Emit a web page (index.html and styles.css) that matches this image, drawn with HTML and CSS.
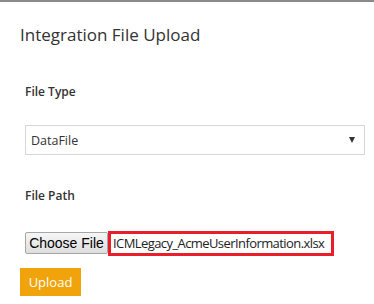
FILE: index.html
```html
<!DOCTYPE html>
<html>
<head>
<meta charset="utf-8">
<link rel="stylesheet" href="styles.css">
</head>
<body>
<div class="topbar"></div>
<div class="panel">
  <h1 class="title">Integration File Upload</h1>
  <div class="form">
    <label class="label">File Type</label>
    <div class="select">
      <span class="select-value">DataFile</span>
      <span class="caret"></span>
    </div>
    <label class="label label-path">File Path</label>
    <div class="file-row">
      <span class="choose">Choose File</span>
      <span class="filename">ICMLegacy_AcmeUserInformation.xlsx</span>
    </div>
  </div>
  <button class="upload">Upload</button>
</div>
</body>
</html>
```
FILE: styles.css
```css
html, body {
  margin: 0;
  padding: 0;
  background: #fff;
}
body {
  font-family: "Open Sans", "Noto Sans", sans-serif;
  color: #333;
}
.topbar {
  height: 2px;
  background: #8a8a8a;
}
.panel {
  padding: 0 4px 0 20px;
}
.title {
  margin: 0;
  padding-top: 21px;
  font-size: 17px;
  font-weight: 400;
  line-height: 24px;
  color: #333;
  letter-spacing: 0;
}
.form {
  padding: 0 5px;
}
.label {
  display: block;
  margin-top: 37px;
  font-size: 12px;
  font-weight: 600;
  line-height: 16px;
  color: #333;
}
.select {
  margin-top: 25px;
  height: 28px;
  border: 1px solid #d6d6d6;
  display: flex;
  align-items: center;
  justify-content: space-between;
  padding: 0 9px 0 5px;
}
.select-value {
  font-size: 12.5px;
  color: #333;
}
.caret {
  width: 0;
  height: 0;
  border-left: 3.5px solid transparent;
  border-right: 3.5px solid transparent;
  border-top: 6px solid #333;
}
.label-path {
  margin-top: 33px;
}
.file-row {
  margin-top: 27px;
  display: flex;
  align-items: flex-start;
}
.choose {
  box-sizing: border-box;
  height: 22px;
  width: 83px;
  border: 1px solid #a6a6a6;
  border-radius: 2px;
  background: linear-gradient(#f6f6f6, #dedede);
  font-family: "Liberation Sans", Arial, sans-serif;
  font-size: 14px;
  line-height: 20px;
  color: #000;
  text-align: center;
  margin-top: 1px;
}
.filename {
  box-sizing: border-box;
  height: 25px;
  width: 226px;
  border: 3px solid #e81f2a;
  padding-left: 2px;
  font-size: 13px;
  line-height: 19px;
  color: #222;
  letter-spacing: -0.58px;
  white-space: nowrap;
  overflow: hidden;
}
.upload {
  display: block;
  margin-top: 12px;
  width: 61px;
  height: 28px;
  border: none;
  background: #f0a30a;
  color: #fff;
  font-family: "Open Sans", "Noto Sans", sans-serif;
  font-size: 13px;
  padding: 0;
}
```
